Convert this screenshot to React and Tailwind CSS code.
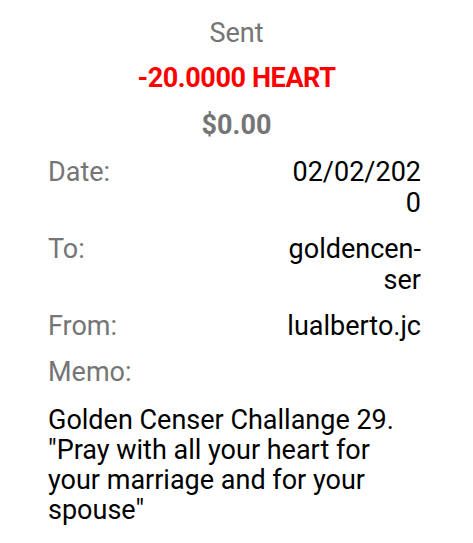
const rows = [
  { label: "Date:", lines: ["02/02/202", "0"] },
  { label: "To:", lines: ["goldencen-", "ser"] },
  { label: "From:", lines: ["lualberto.jc"] },
];

const TransferDetails = () => {
  return (
    <div className="min-h-screen bg-white font-['Roboto',sans-serif] text-[27px] leading-[31px] px-12 pt-[18px]">
      {/* Header */}
      <div className="flex flex-col items-center">
        <p className="text-[#757575]">Sent</p>
        <p className="mt-[14px] font-bold tracking-[-0.4px] text-[#ff0000]">-20.0000 HEART</p>
        <p className="mt-[15.5px] font-bold text-[#757575]">$0.00</p>
      </div>

      {/* Details */}
      <div className="mt-[16.5px] flex flex-col gap-[15px] pr-[4px]">
        {rows.map((row) => (
          <div key={row.label} className="flex justify-between">
            <span className="text-[#757575]">{row.label}</span>
            <div className="flex flex-col items-end text-black">
              {row.lines.map((line, i) => (
                <span key={i} className="whitespace-nowrap">{line}</span>
              ))}
            </div>
          </div>
        ))}
        <span className="text-[#757575]">Memo:</span>
      </div>

      <p className="mt-[17px] text-black leading-[30px]">
        Golden Censer Challange 29. "Pray with all your heart for your marriage and for your spouse"
      </p>
    </div>
  );
};

export default function App() {
  return <TransferDetails />;
}
